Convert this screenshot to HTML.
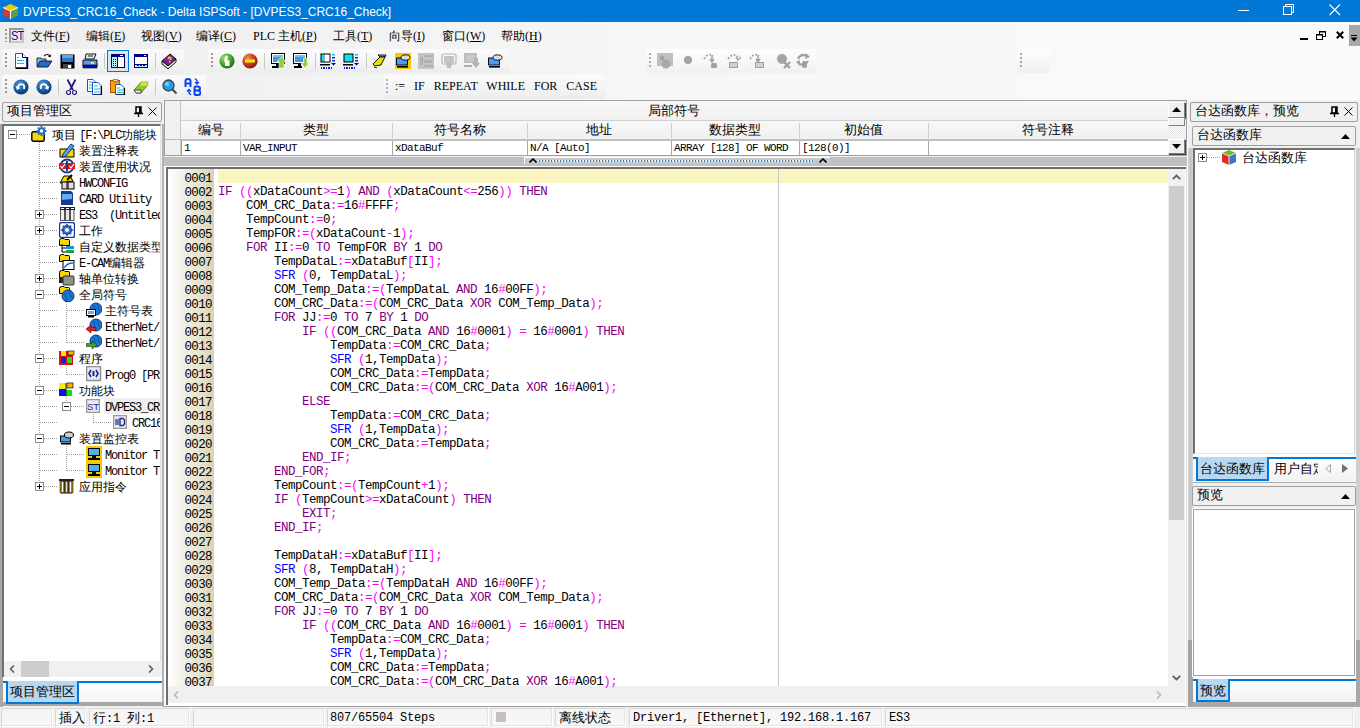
<!DOCTYPE html>
<html><head><meta charset="utf-8"><style>
*{box-sizing:border-box;margin:0;padding:0}
html,body{width:1360px;height:728px;overflow:hidden}
body{position:relative;background:#f0f0f0;font-family:"Liberation Sans",sans-serif;font-size:12px;color:#000;line-height:1}
.a{position:absolute}
.t{position:absolute;white-space:pre;line-height:14px}
.srf{font-family:"Liberation Serif",serif}
.mono{font-family:"Liberation Mono",monospace}
.band{position:absolute;height:24px;border-radius:3px;background:linear-gradient(#fbfbfb,#f3f3f3 60%,#ececec)}
.grip{position:absolute;width:2px;height:15px;top:5px;left:4px;background:repeating-linear-gradient(#9a9a9a 0 2px,transparent 2px 4px)}
.sep{position:absolute;width:1px;height:16px;top:4px;background:#c8c8c8}
.ic{position:absolute;width:16px;height:16px}
.code{position:absolute;left:218px;top:171px;font-family:"Liberation Mono",monospace;font-size:12.5px;letter-spacing:-0.5px;line-height:14px;white-space:pre;color:#000}
.code div{height:14px}
.k{color:#800080}.o{color:#ff00ff}.f{color:#0000ff}
.ln{position:absolute;left:168px;top:172px;width:46px;font-family:"Liberation Mono",monospace;font-size:12.5px;letter-spacing:-0.6px;line-height:14px;text-align:right;padding-right:2px;color:#000;white-space:pre}
</style></head><body>

<!-- title bar -->
<div class="a" style="left:0;top:0;width:1360px;height:23px;background:#0078d7"></div>
<div class="t" style="left:23px;top:5px;color:#fff;font-size:12px">DVPES3_CRC16_Check - Delta ISPSoft - [DVPES3_CRC16_Check]</div>


<svg class="a" style="left:2px;top:3px" width="17" height="17" viewBox="0 0 17 17">
<polygon points="8.5,1 16,4.5 8.5,8 1,4.5" fill="#f0c800"/>
<polygon points="1,4.5 8.5,8 8.5,16 1,12.5" fill="#d83a2a"/>
<polygon points="16,4.5 8.5,8 8.5,16 16,12.5" fill="#5aa050"/>
<polyline points="1,4.5 8.5,8 16,4.5" fill="none" stroke="#fff" stroke-width="1"/>
<line x1="8.5" y1="8" x2="8.5" y2="16" stroke="#fff" stroke-width="1"/>
</svg>
<div class="a" style="left:1238px;top:10px;width:11px;height:1px;background:#fff"></div>
<svg class="a" style="left:1283px;top:4px" width="12" height="12" viewBox="0 0 12 12"><rect x="0.5" y="2.5" width="8" height="8" fill="none" stroke="#fff"/><polyline points="2.5,2.5 2.5,0.5 10.5,0.5 10.5,8.5 8.5,8.5" fill="none" stroke="#fff"/></svg>
<svg class="a" style="left:1329px;top:4px" width="12" height="12" viewBox="0 0 12 12"><path d="M0.5 0.5L11 11M11 0.5L0.5 11" stroke="#fff" stroke-width="1.1"/></svg>

<!-- menu/toolbar area bg -->
<div class="a" style="left:0;top:22px;width:1360px;height:78px;background:linear-gradient(90deg,#eeeeee,#f6f6f6 45%,#fafafa)"></div>


<!-- menu -->
<div class="grip" style="left:5px;top:29px;height:13px"></div>
<div class="a" style="left:9px;top:28px;width:15px;height:15px;background:#ececf4;border:2px solid #9a9a9a;border-right-color:#c8c8c8;border-bottom-color:#c8c8c8"></div>
<div class="t" style="left:11px;top:28px;color:#10108a;font-size:11px;letter-spacing:-0.8px;transform:scaleY(1.2)">ST</div>
<div class="t srf" style="left:31px;top:29px">文件(<u>F</u>)</div>
<div class="t srf" style="left:86px;top:29px">编辑(<u>E</u>)</div>
<div class="t srf" style="left:141px;top:29px">视图(<u>V</u>)</div>
<div class="t srf" style="left:196px;top:29px">编译(<u>C</u>)</div>
<div class="t srf" style="left:253px;top:29px">PLC 主机(<u>P</u>)</div>
<div class="t srf" style="left:333px;top:29px">工具(<u>T</u>)</div>
<div class="t srf" style="left:389px;top:29px">向导(<u>I</u>)</div>
<div class="t srf" style="left:442px;top:29px">窗口(<u>W</u>)</div>
<div class="t srf" style="left:501px;top:29px">帮助(<u>H</u>)</div>
<div class="a" style="left:1300px;top:38px;width:8px;height:2px;background:#000"></div>
<svg class="a" style="left:1316px;top:31px" width="10" height="9" viewBox="0 0 10 9"><rect x="0.5" y="3.5" width="6" height="5" fill="none" stroke="#000"/><rect x="0.5" y="3" width="6" height="1.5" fill="#000"/><polyline points="3.5,3 3.5,0.5 9.5,0.5 9.5,5.5 7,5.5" fill="none" stroke="#000"/><rect x="3" y="0" width="7" height="1.5" fill="#000"/></svg>
<svg class="a" style="left:1336px;top:31px" width="8" height="8" viewBox="0 0 8 8"><path d="M0.8 0.8L7.2 7.2M7.2 0.8L0.8 7.2" stroke="#000" stroke-width="2"/></svg>
<div class="a" style="left:1349px;top:25px;width:11px;height:21px;background:#a8a8a8"></div>
<svg class="a" style="left:1350px;top:35px" width="9" height="8" viewBox="0 0 9 8"><rect x="1" y="0" width="6" height="1" fill="#000"/><polygon points="0.5,2.5 7.5,2.5 4,6.5" fill="#000"/></svg>


<!-- toolbar row 1 -->
<div class="band" style="left:2px;top:49px;width:182px"></div>
<div class="grip" style="left:5px;top:53px;height:14px"></div>
<svg class="a" style="left:14px;top:53px" width="16" height="16" viewBox="0 0 16 16"><path d="M1.5 0.5H8.5L12.5 4.5V14.5H1.5Z" fill="#fff" stroke="#2850d8"/><path d="M8.5 0.5V4.5H12.5" fill="#fff" stroke="#000080"/><path d="M13.5 4V15.5H1.5" fill="none" stroke="#000" stroke-width="1.4"/><path d="M3 4.5H5M3 7.5H10M3 10.5H10" stroke="#10c8d0" stroke-width="1"/></svg>
<svg class="a" style="left:36px;top:53px" width="16" height="16" viewBox="0 0 16 16"><path d="M1 5H5L6 6H10V13H1Z" fill="#80c0f0" stroke="#000" stroke-width="0.8"/><path d="M1 14L4 8H16L12 14Z" fill="#1e6ec8" stroke="#000" stroke-width="0.8"/><path d="M8 3Q11 0 14 3" fill="none" stroke="#000" stroke-width="1.1"/><path d="M12.5 3.5L14.5 3.5L14 1.5" fill="none" stroke="#000"/></svg>
<svg class="a" style="left:60px;top:54px" width="16" height="16" viewBox="0 0 16 16"><rect x="0.5" y="0.5" width="14" height="14" fill="#000"/><rect x="2" y="1" width="11" height="7" fill="#2a78c8"/><rect x="2" y="1" width="11" height="3" fill="#5aa8e8"/><rect x="3" y="10" width="9" height="4" fill="#444"/><rect x="8" y="11" width="3" height="3" fill="#fff"/></svg>
<svg class="a" style="left:82px;top:53px" width="16" height="16" viewBox="0 0 16 16"><path d="M4 1H14L12 6H3Z" fill="#e8e8e8" stroke="#000" stroke-width="0.9"/><rect x="6" y="2" width="5" height="2" fill="#888"/><path d="M1 7H15V13H1Z" fill="#5a9af0" stroke="#000" stroke-width="0.9"/><rect x="9" y="9" width="3" height="2" fill="#f0f000"/><rect x="1" y="12" width="14" height="3" fill="#0010c0" stroke="#000" stroke-width="0.6"/></svg>
<div class="sep" style="left:104px;top:53px"></div>
<div class="a" style="left:107px;top:50px;width:22px;height:22px;background:#d8e6f2;border:1px solid #0078d7"></div>
<svg class="a" style="left:111px;top:54px" width="14" height="14" viewBox="0 0 14 14" shape-rendering="crispEdges"><rect x="0" y="0" width="14" height="14" fill="#000080"/><rect x="1" y="3" width="5" height="10" fill="#b0f4ff"/><rect x="7" y="3" width="6" height="10" fill="#fff"/><rect x="9" y="1" width="3" height="1" fill="#fff"/><g fill="#000080"><rect x="2" y="5" width="1" height="1"/><rect x="4" y="5" width="1" height="1"/><rect x="2" y="7" width="1" height="1"/><rect x="4" y="7" width="1" height="1"/><rect x="2" y="9" width="1" height="1"/><rect x="4" y="9" width="1" height="1"/><rect x="2" y="11" width="1" height="1"/><rect x="4" y="11" width="1" height="1"/></g></svg>
<svg class="a" style="left:134px;top:54px" width="14" height="14" viewBox="0 0 14 14" shape-rendering="crispEdges"><rect x="0" y="0" width="14" height="14" fill="#000080"/><rect x="1" y="3" width="12" height="7" fill="#fff"/><rect x="1" y="11" width="12" height="2" fill="#b0f4ff"/><rect x="10" y="1" width="2" height="1" fill="#fff"/><g fill="#000080"><rect x="3" y="11" width="2" height="1"/><rect x="6" y="11" width="2" height="1"/><rect x="9" y="11" width="2" height="1"/></g></svg>
<div class="sep" style="left:155px;top:53px"></div>
<svg class="a" style="left:161px;top:53px" width="16" height="16" viewBox="0 0 16 16"><path d="M1 8L9 1L15 6L7 13Z" fill="#8020a0" stroke="#000" stroke-width="0.9"/><path d="M1 8L1 11L7 16L15 9L15 6L7 13Z" fill="#e0e0e0" stroke="#000" stroke-width="0.9"/><path d="M7 6Q8 3 10 5Q10 6 8.5 7" fill="none" stroke="#f0e000" stroke-width="1.4"/><rect x="8" y="8" width="1.5" height="1.5" fill="#f0e000"/></svg>

<div class="band" style="left:208px;top:49px;width:301px"></div>
<div class="grip" style="left:211px;top:53px;height:14px"></div>
<svg class="a" style="left:219px;top:53px" width="16" height="16" viewBox="0 0 16 16"><defs><radialGradient id="gg" cx="0.35" cy="0.3" r="0.8"><stop offset="0" stop-color="#a8e070"/><stop offset="0.6" stop-color="#3a9a2a"/><stop offset="1" stop-color="#1a5a1a"/></radialGradient></defs><circle cx="8" cy="8" r="7.6" fill="url(#gg)"/><path d="M6.5 3Q7.5 2 8.5 3V7L10.5 8V13H6V9L5 8Z" fill="#fff"/></svg>
<svg class="a" style="left:242px;top:53px" width="16" height="16" viewBox="0 0 16 16"><defs><radialGradient id="rg" cx="0.35" cy="0.3" r="0.8"><stop offset="0" stop-color="#f09050"/><stop offset="0.6" stop-color="#c03020"/><stop offset="1" stop-color="#701010"/></radialGradient></defs><circle cx="8" cy="8" r="7.6" fill="url(#rg)"/><rect x="3" y="6.5" width="10" height="3" fill="#f8f000"/></svg>
<div class="sep" style="left:264px;top:53px"></div>
<svg class="a" style="left:271px;top:53px" width="16" height="16" viewBox="0 0 16 16"><rect x="0.5" y="0.5" width="13" height="10" fill="#fff" stroke="#000"/><rect x="2" y="2" width="10" height="7" fill="#3a9ee0"/><rect x="2" y="2" width="10" height="2" fill="#70c0f0"/><rect x="1" y="13" width="8" height="2" fill="#000"/><rect x="5" y="11" width="3" height="2" fill="#000"/><path d="M10.5 4L15 8.5H13V15H8V8.5H6Z" fill="#90d030" stroke="#fff" stroke-width="0.6"/></svg>
<svg class="a" style="left:293px;top:53px" width="17" height="16" viewBox="0 0 17 16"><rect x="0.5" y="0.5" width="13" height="10" fill="#fff" stroke="#000"/><rect x="2" y="2" width="10" height="7" fill="#3a9ee0"/><rect x="2" y="2" width="10" height="2" fill="#70c0f0"/><rect x="1" y="13" width="8" height="2" fill="#000"/><rect x="5" y="11" width="3" height="2" fill="#000"/><path d="M10.5 5H13.5V10H16L12 15L8 10H10.5Z" fill="#90d030" stroke="#fff" stroke-width="0.6"/></svg>
<div class="sep" style="left:315px;top:53px"></div>
<svg class="a" style="left:320px;top:53px" width="17" height="16" viewBox="0 0 17 16"><rect x="0.5" y="0.5" width="10" height="9" fill="#000"/><rect x="1.5" y="1.5" width="3" height="7" fill="#10e0f0"/><rect x="4.5" y="1.5" width="5" height="7" fill="#fff"/><rect x="0" y="11" width="10" height="1.5" fill="#000"/><rect x="12" y="1" width="3" height="1.5" fill="#10c0f0"/><rect x="12" y="4" width="3" height="1.5" fill="#0030f0"/><rect x="12" y="7" width="3" height="1.5" fill="#0030f0"/><path d="M11 10H16L13.5 12.5Z" fill="#000080"/><g fill="#0020f0"><rect x="1" y="14" width="1" height="2"/><rect x="3" y="14" width="2" height="2"/><rect x="6" y="14" width="1" height="2"/><rect x="8" y="14" width="2" height="2"/><rect x="11" y="14" width="1" height="2"/></g></svg>
<svg class="a" style="left:343px;top:53px" width="17" height="16" viewBox="0 0 17 16"><rect x="0.5" y="0.5" width="10" height="9" fill="#000"/><rect x="1.5" y="1.5" width="8" height="7" fill="#10e0f0"/><rect x="0" y="11" width="10" height="1.5" fill="#000"/><rect x="12" y="1" width="3" height="1.5" fill="#10c0f0"/><rect x="12" y="4" width="3" height="1.5" fill="#0030f0"/><rect x="12" y="7" width="3" height="1.5" fill="#0030f0"/><path d="M11 10H16L13.5 12.5Z" fill="#000080"/><g fill="#0020f0"><rect x="1" y="14" width="1" height="2"/><rect x="3" y="14" width="2" height="2"/><rect x="6" y="14" width="1" height="2"/><rect x="8" y="14" width="2" height="2"/><rect x="11" y="14" width="1" height="2"/></g></svg>
<div class="sep" style="left:366px;top:53px"></div>
<svg class="a" style="left:372px;top:53px" width="16" height="16" viewBox="0 0 16 16"><path d="M6 2H14L13 4H8Z" fill="#80c0f0" stroke="#000" stroke-width="0.9"/><path d="M8 4H13L9 12L3 13L1 11Z" fill="#e8e000" stroke="#000" stroke-width="0.9"/><path d="M2 14L5 15" stroke="#444" stroke-width="1.2"/></svg>
<svg class="a" style="left:395px;top:53px" width="16" height="16" viewBox="0 0 16 16"><rect x="0" y="0" width="16" height="16" fill="#f8c800"/><rect x="1.5" y="5" width="11" height="7" fill="#4a9af0" stroke="#000" stroke-width="0.9"/><ellipse cx="10.5" cy="4.5" rx="4.5" ry="2.6" fill="#ddd" stroke="#000" stroke-width="0.9"/><rect x="2" y="13" width="11" height="1.6" fill="#000"/></svg>
<svg class="a" style="left:418px;top:53px" width="16" height="16" viewBox="0 0 16 16"><rect x="0" y="0" width="16" height="16" fill="#c4c4c4"/><g fill="#b0b0b0"><rect x="6" y="2" width="9" height="2"/><rect x="2" y="4" width="3" height="8"/><rect x="6" y="7" width="8" height="3"/><rect x="6" y="12" width="9" height="2"/></g></svg>
<svg class="a" style="left:441px;top:53px" width="16" height="16" viewBox="0 0 16 16"><rect x="1" y="1" width="14" height="10" rx="1.5" fill="none" stroke="#b4b4b4" stroke-width="1.2"/><rect x="3" y="3" width="10" height="7" fill="#c4c4c4"/><path d="M5 10H11L10 15H6Z" fill="#bdbdbd"/></svg>
<svg class="a" style="left:464px;top:53px" width="16" height="16" viewBox="0 0 16 16"><rect x="0" y="0" width="13" height="10" fill="#bcbcbc"/><rect x="2" y="1.5" width="9" height="7" fill="#c8c8c8"/><rect x="0" y="12" width="8" height="2" fill="#b0b0b0"/><path d="M10 5H14V10H16L12 15L8 10H10Z" fill="#b4b4b4"/></svg>
<svg class="a" style="left:487px;top:53px" width="16" height="16" viewBox="0 0 16 16"><rect x="1.5" y="5" width="11" height="7" fill="#4a9af0" stroke="#000" stroke-width="0.9"/><ellipse cx="10.5" cy="4.5" rx="4.5" ry="2.6" fill="#ddd" stroke="#000" stroke-width="0.9"/><rect x="2" y="13" width="11" height="1.6" fill="#000"/></svg>

<div class="band" style="left:646px;top:49px;width:171px;background:linear-gradient(#fdfdfd,#f6f6f6 60%,#f0f0f0)"></div>
<div class="grip" style="left:649px;top:53px;height:14px;background:repeating-linear-gradient(#b0b0b0 0 2px,transparent 2px 4px)"></div>
<svg class="a" style="left:657px;top:53px" width="16" height="16" viewBox="0 0 16 16"><rect x="0" y="0" width="16" height="13" fill="#c0c0c0"/><circle cx="9" cy="11" r="4.5" fill="#a8a8a8"/><path d="M3 3L7 7M7 3L3 7" stroke="#9a9a9a" stroke-width="1.5"/></svg>
<svg class="a" style="left:684px;top:56px" width="8" height="8" viewBox="0 0 8 8"><circle cx="4" cy="4" r="4" fill="#a4a4a4"/></svg>
<svg class="a" style="left:703px;top:52px" width="16" height="16" viewBox="0 0 16 16"><path d="M1 7Q5 0 10 4" fill="none" stroke="#a8a8a8" stroke-width="1.8" stroke-dasharray="2 1.5"/><path d="M9 3V9M7 7L9 10L11 7" fill="none" stroke="#a0a0a0" stroke-width="1.4"/><rect x="8" y="11" width="6" height="5" rx="1.5" fill="#a0a0a0"/></svg>
<svg class="a" style="left:727px;top:52px" width="16" height="16" viewBox="0 0 16 16"><path d="M1 7Q6 0 11 5" fill="none" stroke="#a8a8a8" stroke-width="1.8" stroke-dasharray="2 1.5"/><path d="M9 5L11 8L14 5" fill="none" stroke="#a0a0a0" stroke-width="1.4"/><rect x="2.5" y="10.5" width="8" height="5" fill="#d0d0d0" stroke="#a0a0a0"/></svg>
<svg class="a" style="left:749px;top:52px" width="16" height="16" viewBox="0 0 16 16"><path d="M1 7Q5 0 10 4" fill="none" stroke="#a8a8a8" stroke-width="1.8" stroke-dasharray="2 1.5"/><path d="M9 3V9M7 7L9 10L11 7" fill="none" stroke="#a0a0a0" stroke-width="1.4"/><rect x="6.5" y="10.5" width="8" height="5" fill="#d0d0d0" stroke="#a0a0a0"/></svg>
<svg class="a" style="left:776px;top:53px" width="16" height="16" viewBox="0 0 16 16"><circle cx="6" cy="6" r="5" fill="#a4a4a4"/><path d="M8 9L14 15M14 9L8 15" stroke="#a0a0a0" stroke-width="2.4"/></svg>
<svg class="a" style="left:795px;top:52px" width="16" height="16" viewBox="0 0 16 16"><path d="M3 7Q6 1 12 4" fill="none" stroke="#a4a4a4" stroke-width="2.2"/><path d="M11 1L15 5L10 7Z" fill="#a4a4a4"/><path d="M13 9Q10 14 4 12" fill="none" stroke="#a4a4a4" stroke-width="2.2"/><path d="M1 10L5 8L5 14Z" fill="#a4a4a4"/><rect x="7" y="9" width="5" height="7" rx="2" fill="#a0a0a0"/></svg>

<div class="band" style="left:1017px;top:49px;width:34px;background:linear-gradient(#fdfdfd,#f6f6f6 60%,#f0f0f0)"></div>
<div class="grip" style="left:1020px;top:53px;height:14px;background:repeating-linear-gradient(#a8a8a8 0 2px,transparent 2px 4px)"></div>

<!-- toolbar row 2 -->
<div class="band" style="left:2px;top:75px;width:204px"></div>
<div class="grip" style="left:5px;top:79px;height:14px"></div>
<svg class="a" style="left:13px;top:79px" width="16" height="16" viewBox="0 0 16 16"><defs><radialGradient id="bg1" cx="0.4" cy="0.3" r="0.8"><stop offset="0" stop-color="#4a9ae0"/><stop offset="0.65" stop-color="#14508c"/><stop offset="1" stop-color="#082040"/></radialGradient></defs><circle cx="8" cy="8" r="7.6" fill="url(#bg1)"/><path d="M4.5 9Q6 4 10 5.5Q12 7 11 10" fill="none" stroke="#fff" stroke-width="1.8"/><path d="M2.5 7L4 11L7.5 9Z" fill="#fff"/></svg>
<svg class="a" style="left:36px;top:79px" width="16" height="16" viewBox="0 0 16 16"><circle cx="8" cy="8" r="7.6" fill="url(#bg1)"/><path d="M11.5 9Q10 4 6 5.5Q4 7 5 10" fill="none" stroke="#fff" stroke-width="1.8"/><path d="M13.5 7L12 11L8.5 9Z" fill="#fff"/></svg>
<div class="sep" style="left:58px;top:79px"></div>
<svg class="a" style="left:65px;top:79px" width="13" height="16" viewBox="0 0 13 16"><path d="M2.5 0.5L8 11M10.5 0.5L5 11" stroke="#2a1a80" stroke-width="1.8"/><circle cx="3.5" cy="13.5" r="2" fill="none" stroke="#2a1a80" stroke-width="1.2"/><circle cx="9.5" cy="13.5" r="2" fill="none" stroke="#2a1a80" stroke-width="1.2"/></svg>
<svg class="a" style="left:87px;top:79px" width="16" height="16" viewBox="0 0 16 16"><path d="M0.5 0.5H6L8 2.5V12.5H0.5Z" fill="#fff" stroke="#2050d0"/><path d="M2 3H6M2 6H7M2 9H7" stroke="#20c0c0"/><path d="M5.5 3.5H11L14 6.5V15.5H5.5Z" fill="#fff" stroke="#2050d0"/><path d="M14.5 7V16H6" fill="none" stroke="#000" stroke-width="1.1"/><path d="M7 7H11M7 10H13M7 13H13" stroke="#20c0c0"/></svg>
<svg class="a" style="left:110px;top:79px" width="16" height="16" viewBox="0 0 16 16"><rect x="0.5" y="1.5" width="9" height="12" fill="#f8a800" stroke="#a04000" stroke-width="0.9"/><rect x="3" y="0.3" width="5" height="2.5" rx="1" fill="#e8d0a0" stroke="#804000" stroke-width="0.7"/><path d="M5.5 5.5H11L14 8.5V15.5H5.5Z" fill="#fff" stroke="#2050d0"/><path d="M14.5 9V16H6" fill="none" stroke="#000" stroke-width="1.1"/><path d="M7 9H10M7 11H13M7 13.5H13" stroke="#20c0c0"/></svg>
<svg class="a" style="left:133px;top:79px" width="16" height="16" viewBox="0 0 16 16"><path d="M1 11L8 3H15L14 7L8 14H3Z" fill="#90c820" stroke="#405010" stroke-width="0.6"/><path d="M8 3H15L14 7H7Z" fill="#c0e830"/><path d="M1 11H8V14H3Z" fill="#f0f0f0" stroke="#404040" stroke-width="0.9"/></svg>
<div class="sep" style="left:155px;top:79px"></div>
<svg class="a" style="left:162px;top:79px" width="16" height="16" viewBox="0 0 16 16"><circle cx="6.5" cy="6.5" r="5.5" fill="#1aa0f0" stroke="#404040" stroke-width="1.3"/><circle cx="5" cy="5" r="2" fill="#80d0ff"/><path d="M10.5 10.5L14.5 14.5" stroke="#404040" stroke-width="1.8"/></svg>
<svg class="a" style="left:184px;top:78px" width="17" height="18" viewBox="0 0 17 18"><path d="M1.5 9V3Q1.5 1 4 1Q6.5 1 6.5 3V9M1.5 5.5H6.5" fill="none" stroke="#0a40f0" stroke-width="2"/><path d="M10.5 8.5V17M10.5 8.5H13.5Q16 8.5 16 10.8Q16 12.5 13.5 12.5H10.5M13.5 12.5Q16.5 12.5 16.5 14.8Q16.5 17 13.5 17H10.5" fill="none" stroke="#0a40f0" stroke-width="2"/><path d="M11 0.5L13 2.5V5.5M11 4L13 6L15 4" fill="none" stroke="#0a40f0" stroke-width="1.3"/><path d="M7 17L5 15V12M7 13.5L5 11.5L3 13.5" fill="none" stroke="#0a40f0" stroke-width="1.3"/></svg>

<div class="band" style="left:383px;top:75px;width:222px"></div>
<div class="grip" style="left:386px;top:79px;height:14px;background:repeating-linear-gradient(#b0b0b0 0 2px,transparent 2px 4px)"></div>
<div class="t srf" style="left:395px;top:79px;font-size:12px;word-spacing:0">:=   IF   REPEAT   WHILE   FOR   CASE</div>


<!-- left panel -->
<div class="a" style="left:0;top:100px;width:165px;height:607px;background:#f0f0f0"></div>
<div class="a" style="left:2px;top:102px;width:160px;height:20px;background:#f0f0f0;border:1px solid #a0a0a0;border-radius:2px"></div>
<div class="t" style="left:7px;top:104px;font-size:13px">项目管理区</div>
<svg class="a" style="left:134px;top:106px" width="9" height="11" viewBox="0 0 9 11"><path d="M2 1H7V7H2Z" fill="none" stroke="#000" stroke-width="1.5"/><rect x="5" y="1" width="2" height="6" fill="#000"/><path d="M0 7.5H9M4.5 7.5V11" stroke="#000" stroke-width="1.3"/></svg>
<svg class="a" style="left:148px;top:107px" width="9" height="9" viewBox="0 0 9 9"><path d="M0.5 0.5L8.5 8.5M8.5 0.5L0.5 8.5" stroke="#000" stroke-width="1"/></svg>
<div class="a" style="left:0;top:124px;width:3px;height:583px;background:#a8a8a8"></div>
<div class="a" style="left:162px;top:124px;width:3px;height:583px;background:#b4b4b4"></div>
<div class="a" style="left:2px;top:124px;width:159px;height:553px;background:#fff;border-top:2px solid #707070;border-left:2px solid #707070;border-right:1px solid #e0e0e0"></div>
<div class="a" style="left:3px;top:702px;width:162px;height:4px;background:#a8a8a8"></div>
<div class="a" style="left:39px;top:140px;width:1px;height:347px;background:repeating-linear-gradient(#a0a0a0 0 1px,transparent 1px 2px)"></div>
<div class="a" style="left:66px;top:300px;width:1px;height:43px;background:repeating-linear-gradient(#a0a0a0 0 1px,transparent 1px 2px)"></div>
<div class="a" style="left:66px;top:364px;width:1px;height:11px;background:repeating-linear-gradient(#a0a0a0 0 1px,transparent 1px 2px)"></div>
<div class="a" style="left:66px;top:396px;width:1px;height:6px;background:repeating-linear-gradient(#a0a0a0 0 1px,transparent 1px 2px)"></div>
<div class="a" style="left:93px;top:412px;width:1px;height:11px;background:repeating-linear-gradient(#a0a0a0 0 1px,transparent 1px 2px)"></div>
<div class="a" style="left:66px;top:444px;width:1px;height:27px;background:repeating-linear-gradient(#a0a0a0 0 1px,transparent 1px 2px)"></div>
<div class="a" style="left:17px;top:134px;width:14px;height:1px;background:repeating-linear-gradient(90deg,#a0a0a0 0 1px,transparent 1px 2px)"></div>
<div class="a" style="left:40px;top:150px;width:18px;height:1px;background:repeating-linear-gradient(90deg,#a0a0a0 0 1px,transparent 1px 2px)"></div>
<div class="a" style="left:40px;top:166px;width:18px;height:1px;background:repeating-linear-gradient(90deg,#a0a0a0 0 1px,transparent 1px 2px)"></div>
<div class="a" style="left:40px;top:182px;width:18px;height:1px;background:repeating-linear-gradient(90deg,#a0a0a0 0 1px,transparent 1px 2px)"></div>
<div class="a" style="left:40px;top:198px;width:18px;height:1px;background:repeating-linear-gradient(90deg,#a0a0a0 0 1px,transparent 1px 2px)"></div>
<div class="a" style="left:40px;top:214px;width:18px;height:1px;background:repeating-linear-gradient(90deg,#a0a0a0 0 1px,transparent 1px 2px)"></div>
<div class="a" style="left:40px;top:230px;width:18px;height:1px;background:repeating-linear-gradient(90deg,#a0a0a0 0 1px,transparent 1px 2px)"></div>
<div class="a" style="left:40px;top:246px;width:18px;height:1px;background:repeating-linear-gradient(90deg,#a0a0a0 0 1px,transparent 1px 2px)"></div>
<div class="a" style="left:40px;top:262px;width:18px;height:1px;background:repeating-linear-gradient(90deg,#a0a0a0 0 1px,transparent 1px 2px)"></div>
<div class="a" style="left:40px;top:278px;width:18px;height:1px;background:repeating-linear-gradient(90deg,#a0a0a0 0 1px,transparent 1px 2px)"></div>
<div class="a" style="left:40px;top:294px;width:18px;height:1px;background:repeating-linear-gradient(90deg,#a0a0a0 0 1px,transparent 1px 2px)"></div>
<div class="a" style="left:40px;top:310px;width:18px;height:1px;background:repeating-linear-gradient(90deg,#a0a0a0 0 1px,transparent 1px 2px)"></div>
<div class="a" style="left:40px;top:326px;width:18px;height:1px;background:repeating-linear-gradient(90deg,#a0a0a0 0 1px,transparent 1px 2px)"></div>
<div class="a" style="left:40px;top:342px;width:18px;height:1px;background:repeating-linear-gradient(90deg,#a0a0a0 0 1px,transparent 1px 2px)"></div>
<div class="a" style="left:40px;top:358px;width:18px;height:1px;background:repeating-linear-gradient(90deg,#a0a0a0 0 1px,transparent 1px 2px)"></div>
<div class="a" style="left:40px;top:374px;width:18px;height:1px;background:repeating-linear-gradient(90deg,#a0a0a0 0 1px,transparent 1px 2px)"></div>
<div class="a" style="left:40px;top:390px;width:18px;height:1px;background:repeating-linear-gradient(90deg,#a0a0a0 0 1px,transparent 1px 2px)"></div>
<div class="a" style="left:40px;top:406px;width:18px;height:1px;background:repeating-linear-gradient(90deg,#a0a0a0 0 1px,transparent 1px 2px)"></div>
<div class="a" style="left:40px;top:422px;width:18px;height:1px;background:repeating-linear-gradient(90deg,#a0a0a0 0 1px,transparent 1px 2px)"></div>
<div class="a" style="left:40px;top:438px;width:18px;height:1px;background:repeating-linear-gradient(90deg,#a0a0a0 0 1px,transparent 1px 2px)"></div>
<div class="a" style="left:40px;top:454px;width:18px;height:1px;background:repeating-linear-gradient(90deg,#a0a0a0 0 1px,transparent 1px 2px)"></div>
<div class="a" style="left:40px;top:470px;width:18px;height:1px;background:repeating-linear-gradient(90deg,#a0a0a0 0 1px,transparent 1px 2px)"></div>
<div class="a" style="left:40px;top:486px;width:18px;height:1px;background:repeating-linear-gradient(90deg,#a0a0a0 0 1px,transparent 1px 2px)"></div>
<div class="a" style="left:67px;top:310px;width:18px;height:1px;background:repeating-linear-gradient(90deg,#a0a0a0 0 1px,transparent 1px 2px)"></div>
<div class="a" style="left:67px;top:326px;width:18px;height:1px;background:repeating-linear-gradient(90deg,#a0a0a0 0 1px,transparent 1px 2px)"></div>
<div class="a" style="left:67px;top:342px;width:18px;height:1px;background:repeating-linear-gradient(90deg,#a0a0a0 0 1px,transparent 1px 2px)"></div>
<div class="a" style="left:67px;top:374px;width:18px;height:1px;background:repeating-linear-gradient(90deg,#a0a0a0 0 1px,transparent 1px 2px)"></div>
<div class="a" style="left:67px;top:454px;width:18px;height:1px;background:repeating-linear-gradient(90deg,#a0a0a0 0 1px,transparent 1px 2px)"></div>
<div class="a" style="left:67px;top:470px;width:18px;height:1px;background:repeating-linear-gradient(90deg,#a0a0a0 0 1px,transparent 1px 2px)"></div>
<div class="a" style="left:71px;top:406px;width:14px;height:1px;background:repeating-linear-gradient(90deg,#a0a0a0 0 1px,transparent 1px 2px)"></div>
<div class="a" style="left:94px;top:422px;width:18px;height:1px;background:repeating-linear-gradient(90deg,#a0a0a0 0 1px,transparent 1px 2px)"></div>
<div class="a" style="left:8px;top:130px;width:9px;height:9px;background:#fff;border:1px solid #8c8c8c"></div>
<div class="a" style="left:10px;top:134px;width:5px;height:1px;background:#000"></div>
<div class="a" style="left:35px;top:210px;width:9px;height:9px;background:#fff;border:1px solid #8c8c8c"></div>
<div class="a" style="left:37px;top:214px;width:5px;height:1px;background:#000"></div>
<div class="a" style="left:39px;top:212px;width:1px;height:5px;background:#000"></div>
<div class="a" style="left:35px;top:226px;width:9px;height:9px;background:#fff;border:1px solid #8c8c8c"></div>
<div class="a" style="left:37px;top:230px;width:5px;height:1px;background:#000"></div>
<div class="a" style="left:39px;top:228px;width:1px;height:5px;background:#000"></div>
<div class="a" style="left:35px;top:274px;width:9px;height:9px;background:#fff;border:1px solid #8c8c8c"></div>
<div class="a" style="left:37px;top:278px;width:5px;height:1px;background:#000"></div>
<div class="a" style="left:39px;top:276px;width:1px;height:5px;background:#000"></div>
<div class="a" style="left:35px;top:290px;width:9px;height:9px;background:#fff;border:1px solid #8c8c8c"></div>
<div class="a" style="left:37px;top:294px;width:5px;height:1px;background:#000"></div>
<div class="a" style="left:35px;top:354px;width:9px;height:9px;background:#fff;border:1px solid #8c8c8c"></div>
<div class="a" style="left:37px;top:358px;width:5px;height:1px;background:#000"></div>
<div class="a" style="left:35px;top:386px;width:9px;height:9px;background:#fff;border:1px solid #8c8c8c"></div>
<div class="a" style="left:37px;top:390px;width:5px;height:1px;background:#000"></div>
<div class="a" style="left:35px;top:434px;width:9px;height:9px;background:#fff;border:1px solid #8c8c8c"></div>
<div class="a" style="left:37px;top:438px;width:5px;height:1px;background:#000"></div>
<div class="a" style="left:35px;top:482px;width:9px;height:9px;background:#fff;border:1px solid #8c8c8c"></div>
<div class="a" style="left:37px;top:486px;width:5px;height:1px;background:#000"></div>
<div class="a" style="left:39px;top:484px;width:1px;height:5px;background:#000"></div>
<div class="a" style="left:62px;top:402px;width:9px;height:9px;background:#fff;border:1px solid #8c8c8c"></div>
<div class="a" style="left:64px;top:406px;width:5px;height:1px;background:#000"></div>
<div class="a" style="left:104px;top:398px;width:56px;height:16px;background:#efefef"></div>
<div class="a" style="left:4px;top:126px;width:156px;height:551px;overflow:hidden">
<div class="t" style="left:48px;top:2px;font-size:12px">项目 <span style="font-family:'Liberation Mono',monospace;font-size:12px;letter-spacing:-1.2px">[F:\PLC</span>功能块</div>
<div class="t" style="left:75px;top:18px;font-size:12px">装置注释表</div>
<div class="t" style="left:75px;top:34px;font-size:12px">装置使用状况</div>
<div class="t" style="left:75px;top:50px;font-size:12px"><span style="font-family:'Liberation Mono',monospace;font-size:12px;letter-spacing:-1.2px">HWCONFIG</span></div>
<div class="t" style="left:75px;top:66px;font-size:12px"><span style="font-family:'Liberation Mono',monospace;font-size:12px;letter-spacing:-1.2px">CARD Utility</span></div>
<div class="t" style="left:75px;top:82px;font-size:12px"><span style="font-family:'Liberation Mono',monospace;font-size:12px;letter-spacing:-1.2px">ES3  (Untitled</span></div>
<div class="t" style="left:75px;top:98px;font-size:12px">工作</div>
<div class="t" style="left:75px;top:114px;font-size:12px">自定义数据类型</div>
<div class="t" style="left:75px;top:130px;font-size:12px"><span style="font-family:'Liberation Mono',monospace;font-size:12px;letter-spacing:-1.2px">E-CAM</span>编辑器</div>
<div class="t" style="left:75px;top:146px;font-size:12px">轴单位转换</div>
<div class="t" style="left:75px;top:162px;font-size:12px">全局符号</div>
<div class="t" style="left:101px;top:178px;font-size:12px">主符号表</div>
<div class="t" style="left:101px;top:194px;font-size:12px"><span style="font-family:'Liberation Mono',monospace;font-size:12px;letter-spacing:-1.2px">EtherNet/</span></div>
<div class="t" style="left:101px;top:210px;font-size:12px"><span style="font-family:'Liberation Mono',monospace;font-size:12px;letter-spacing:-1.2px">EtherNet/</span></div>
<div class="t" style="left:75px;top:226px;font-size:12px">程序</div>
<div class="t" style="left:101px;top:242px;font-size:12px"><span style="font-family:'Liberation Mono',monospace;font-size:12px;letter-spacing:-1.2px">Prog0 [PR</span></div>
<div class="t" style="left:75px;top:258px;font-size:12px">功能块</div>
<div class="t" style="left:101px;top:274px;font-size:12px"><span style="font-family:'Liberation Mono',monospace;font-size:12px;letter-spacing:-1.2px">DVPES3_CR</span></div>
<div class="t" style="left:128px;top:290px;font-size:12px"><span style="font-family:'Liberation Mono',monospace;font-size:12px;letter-spacing:-1.2px">CRC16</span></div>
<div class="t" style="left:75px;top:306px;font-size:12px">装置监控表</div>
<div class="t" style="left:101px;top:322px;font-size:12px"><span style="font-family:'Liberation Mono',monospace;font-size:12px;letter-spacing:-1.2px">Monitor T</span></div>
<div class="t" style="left:101px;top:338px;font-size:12px"><span style="font-family:'Liberation Mono',monospace;font-size:12px;letter-spacing:-1.2px">Monitor T</span></div>
<div class="t" style="left:75px;top:354px;font-size:12px">应用指令</div>
</div>
<svg class="a" style="left:31px;top:126px" width="16" height="16" viewBox="0 0 16 16"><rect x="0.8" y="5.8" width="12.4" height="9.4" rx="1.8" fill="#f8d800" stroke="#000" stroke-width="1.4"/><g transform="translate(10.5 5)"><circle r="3.6" fill="#2a70c8"/><path d="M0 -5V5M-5 0H5M-3.5 -3.5L3.5 3.5M3.5 -3.5L-3.5 3.5" stroke="#2a70c8" stroke-width="2"/><circle r="1.7" fill="#fff"/></g></svg>
<svg class="a" style="left:59px;top:142px" width="16" height="16" viewBox="0 0 16 16"><path d="M1 7H15V15H1Z" fill="#f8d800" stroke="#000"/><path d="M4 12L12 2L15 4L7 14L3 15Z" fill="#5a9ae8" stroke="#0a3a90"/></svg>
<svg class="a" style="left:59px;top:158px" width="16" height="16" viewBox="0 0 16 16"><circle cx="8" cy="8" r="6.5" fill="none" stroke="#1a3a90" stroke-width="2"/><rect x="0" y="5" width="7" height="6" fill="#e01818"/><rect x="9" y="5" width="7" height="6" fill="#e01818"/><path d="M1.5 8L3 10L6 6M10.5 8L12 10L15 6" fill="none" stroke="#fff" stroke-width="1.2"/><rect x="7" y="3" width="2" height="10" fill="#1a3a90"/></svg>
<svg class="a" style="left:59px;top:174px" width="16" height="16" viewBox="0 0 16 16"><path d="M1 9L5 2H11L14 7Z" fill="#f8d800" stroke="#000"/><rect x="3" y="8" width="5" height="7" fill="#ddd" stroke="#000"/><rect x="9" y="8" width="6" height="7" fill="#ddd" stroke="#000"/><path d="M8 6L13 1" stroke="#000" stroke-width="2"/></svg>
<svg class="a" style="left:59px;top:190px" width="16" height="16" viewBox="0 0 16 16"><path d="M2 1H12L14 3V15H2Z" fill="#1a3a90"/><path d="M3 4H13V9L3 10Z" fill="#60b0f0"/></svg>
<svg class="a" style="left:59px;top:206px" width="16" height="16" viewBox="0 0 16 16"><rect x="1.5" y="1.5" width="4" height="13" fill="#f0f0f0" stroke="#555"/><rect x="6.5" y="1.5" width="4" height="13" fill="#e8e8e8" stroke="#555"/><rect x="11.5" y="1.5" width="3.5" height="13" fill="#f0f0f0" stroke="#555"/><rect x="1" y="1" width="15" height="3" fill="#222"/><g fill="#fff"><rect x="2" y="2" width="3" height="1"/><rect x="7" y="2" width="3" height="1"/><rect x="12" y="2" width="3" height="1"/></g></svg>
<svg class="a" style="left:59px;top:222px" width="16" height="16" viewBox="0 0 16 16"><rect x="0.5" y="0.5" width="15" height="15" rx="2" fill="#fff" stroke="#1a3a90" stroke-width="1.4"/><circle cx="8" cy="8" r="4" fill="none" stroke="#2050c0" stroke-width="2.2"/><path d="M8 2V14M2 8H14M3.8 3.8L12.2 12.2M12.2 3.8L3.8 12.2" stroke="#2050c0" stroke-width="1.6"/><circle cx="8" cy="8" r="2" fill="#fff"/></svg>
<svg class="a" style="left:59px;top:238px" width="16" height="16" viewBox="0 0 16 16"><path d="M0.5 2.5Q0.5 0.5 2.5 0.5H5L6 1.5H9.5Q10.5 1.5 10.5 2.5V7.5H0.5Z" fill="#f8d800" stroke="#000"/><path d="M3 6V14H7M3 10H7" fill="none" stroke="#000"/><rect x="7" y="8" width="8" height="3" fill="#1a90e0"/><rect x="7" y="12" width="8" height="3" fill="#20a040"/></svg>
<svg class="a" style="left:59px;top:254px" width="16" height="16" viewBox="0 0 16 16"><path d="M0.5 2.5Q0.5 0.5 2.5 0.5H5L6 1.5H9.5Q10.5 1.5 10.5 2.5V7.5H0.5Z" fill="#f8d800" stroke="#000"/><rect x="4" y="6.5" width="11" height="9" fill="#fff" stroke="#000"/><path d="M5 14Q8 9 14 9" fill="none" stroke="#2060d0" stroke-width="1.3"/></svg>
<svg class="a" style="left:59px;top:270px" width="16" height="16" viewBox="0 0 16 16"><path d="M0.5 2.5Q0.5 0.5 2.5 0.5H5L6 1.5H9.5Q10.5 1.5 10.5 2.5V7.5H0.5Z" fill="#f8d800" stroke="#000"/><rect x="0" y="7" width="5" height="6" fill="#222"/><rect x="4" y="6" width="11" height="9" rx="1" fill="#909090" stroke="#333"/></svg>
<svg class="a" style="left:59px;top:286px" width="16" height="16" viewBox="0 0 16 16"><path d="M0.5 2.5Q0.5 0.5 2.5 0.5H5L6 1.5H9.5Q10.5 1.5 10.5 2.5V7.5H0.5Z" fill="#f8d800" stroke="#000"/><circle cx="9" cy="10" r="6" fill="#1a78d0" stroke="#0a3a80"/><path d="M5 7Q9 10 7 15M11 5Q10 10 14 12" fill="none" stroke="#0a50a0"/></svg>
<svg class="a" style="left:86px;top:302px" width="16" height="16" viewBox="0 0 16 16"><circle cx="10" cy="7" r="6" fill="#1a78d0" stroke="#0a3a80"/><path d="M7 3Q10 6 8 12M12 2Q11 7 15 9" fill="none" stroke="#0a50a0"/><rect x="0.5" y="7.5" width="9" height="6" fill="#fff" stroke="#000"/><rect x="2" y="9" width="6" height="3" fill="#5ab0f0"/><rect x="2" y="14" width="6" height="1.5" fill="#000"/></svg>
<svg class="a" style="left:86px;top:318px" width="16" height="16" viewBox="0 0 16 16"><circle cx="10" cy="7" r="6" fill="#1a78d0" stroke="#0a3a80"/><path d="M7 3Q10 6 8 12M12 2Q11 7 15 9" fill="none" stroke="#0a50a0"/><path d="M0 11L5 7V9.5H10V12.5H5V15Z" fill="#e02020" stroke="#600" stroke-width="0.6"/></svg>
<svg class="a" style="left:86px;top:334px" width="16" height="16" viewBox="0 0 16 16"><circle cx="10" cy="7" r="6" fill="#1a78d0" stroke="#0a3a80"/><path d="M7 3Q10 6 8 12M12 2Q11 7 15 9" fill="none" stroke="#0a50a0"/><path d="M11 11L6 7V9.5H0V12.5H6V15Z" fill="#40a030" stroke="#204010" stroke-width="0.6"/></svg>
<svg class="a" style="left:59px;top:350px" width="16" height="16" viewBox="0 0 16 16"><rect x="0" y="1" width="14" height="14" fill="#e01010"/><rect x="2" y="1" width="5" height="5" fill="#f8e000"/><rect x="2" y="7" width="5" height="6" fill="#1020e0"/><rect x="8" y="7" width="5" height="6" fill="#20e020"/><rect x="9" y="1" width="6" height="4" fill="#f8b000" stroke="#000" stroke-width="0.6"/></svg>
<svg class="a" style="left:86px;top:366px" width="16" height="16" viewBox="0 0 16 16"><rect x="0.5" y="0.5" width="14" height="14" fill="#e8e8f0" stroke="#909090" stroke-width="1.5"/><path d="M5 4L3 7.5L5 11M10 4L12 7.5L10 11" fill="none" stroke="#1a2a90" stroke-width="1.6"/><rect x="6.5" y="5" width="2" height="5" fill="#1a2a90"/></svg>
<svg class="a" style="left:59px;top:382px" width="16" height="16" viewBox="0 0 16 16"><rect x="0" y="1" width="7" height="6" fill="#f8f000"/><rect x="0" y="7" width="7" height="7" fill="#0a10f0"/><rect x="7" y="8" width="6" height="6" fill="#10e010"/><rect x="8" y="1" width="6" height="5" fill="#f8b000" stroke="#402000" stroke-width="0.8"/><rect x="6.5" y="1" width="1" height="13" fill="#222"/></svg>
<svg class="a" style="left:86px;top:399px" width="14" height="14" viewBox="0 0 14 14"><rect x="0.5" y="0.5" width="13" height="13" fill="#eaeaf0" stroke="#9a9a9a" stroke-width="1.5"/><text x="7" y="11" font-family="Liberation Sans" font-size="9.5" fill="#1a1aa0" text-anchor="middle">ST</text></svg>
<svg class="a" style="left:113px;top:415px" width="14" height="14" viewBox="0 0 14 14"><rect x="0.5" y="0.5" width="13" height="13" fill="#eaeaf0" stroke="#9a9a9a" stroke-width="1.5"/><path d="M3 4V10M5 4V10" stroke="#1a2a90" stroke-width="1.2"/><path d="M7 3.5H10L11.5 5V9L10 10.5H7Z" fill="none" stroke="#1a2a90" stroke-width="1.4"/></svg>
<svg class="a" style="left:59px;top:430px" width="16" height="16" viewBox="0 0 16 16"><rect x="1.5" y="6" width="10" height="6" fill="#4a9af0" stroke="#000"/><ellipse cx="10" cy="5" rx="4.5" ry="3" fill="#ccc" stroke="#000"/><rect x="2" y="13" width="10" height="1.5" fill="#000"/></svg>
<svg class="a" style="left:86px;top:446px" width="16" height="16" viewBox="0 0 16 16"><rect x="0" y="0" width="16" height="16" fill="#f8c800"/><rect x="2" y="2" width="12" height="8" fill="#000"/><rect x="3" y="3" width="10" height="6" fill="#4ab0f0"/><rect x="2" y="12" width="12" height="2" fill="#000"/><rect x="6" y="10" width="4" height="2" fill="#000"/></svg>
<svg class="a" style="left:86px;top:462px" width="16" height="16" viewBox="0 0 16 16"><rect x="0" y="0" width="16" height="16" fill="#f8c800"/><rect x="2" y="2" width="12" height="8" fill="#000"/><rect x="3" y="3" width="10" height="6" fill="#4ab0f0"/><rect x="2" y="12" width="12" height="2" fill="#000"/><rect x="6" y="10" width="4" height="2" fill="#000"/></svg>
<svg class="a" style="left:59px;top:478px" width="16" height="16" viewBox="0 0 16 16"><rect x="0" y="1" width="15" height="14" fill="#f8c800"/><rect x="2" y="3" width="3" height="12" fill="#fff" stroke="#000"/><rect x="6" y="3" width="3" height="12" fill="#ddd" stroke="#000"/><rect x="10" y="3" width="3" height="12" fill="#fff" stroke="#000"/><rect x="0" y="1" width="15" height="2" fill="#222"/></svg>

<!-- left h-scroll -->
<div class="a" style="left:4px;top:661px;width:157px;height:16px;background:#f0f0f0"></div>
<div class="a" style="left:21px;top:661px;width:28px;height:16px;background:#cdcdcd"></div>
<svg class="a" style="left:9px;top:665px" width="6" height="8" viewBox="0 0 6 8"><path d="M5 0.5L1.5 4L5 7.5" fill="none" stroke="#606060" stroke-width="1.6"/></svg>
<svg class="a" style="left:148px;top:665px" width="6" height="8" viewBox="0 0 6 8"><path d="M1 0.5L4.5 4L1 7.5" fill="none" stroke="#606060" stroke-width="1.6"/></svg>
<!-- left tab strip -->
<div class="a" style="left:3px;top:677px;width:159px;height:25px;background:linear-gradient(#fff,#f4f4f4)"></div>
<div class="a" style="left:3px;top:681px;width:159px;height:2px;background:#0078d7"></div>
<div class="a" style="left:6px;top:681px;width:73px;height:23px;background:#b8d8f2;border:2px solid #0078d7;border-top:0"></div>
<div class="t" style="left:10px;top:685px;font-size:13px">项目管理区</div>



<!-- local symbol table -->
<div class="a" style="left:164px;top:100px;width:1023px;height:56px;background:#fff;border:1px solid #a0a0a0"></div>
<div class="a" style="left:165px;top:101px;width:16px;height:54px;background:#f0f0f0;border-right:1px solid #c8c8c8"></div>
<div class="a" style="left:181px;top:101px;width:987px;height:19px;background:linear-gradient(#f8f8f8,#f0f0f0)"></div>
<div class="a" style="left:181px;top:120px;width:987px;height:20px;background:linear-gradient(#f8f8f8,#f0f0f0);border-top:1px solid #d0d0d0;border-bottom:1px solid #c0c0c0"></div>
<div class="t" style="left:648px;top:104px;font-size:13px">局部符号</div>
<div class="t" style="left:181px;top:123px;width:59px;text-align:center;font-size:13px">编号</div>
<div class="a" style="left:240px;top:123px;width:1px;height:15px;background:#d0d0d0"></div>
<div class="t" style="left:240px;top:123px;width:152px;text-align:center;font-size:13px">类型</div>
<div class="a" style="left:392px;top:123px;width:1px;height:15px;background:#d0d0d0"></div>
<div class="t" style="left:392px;top:123px;width:135px;text-align:center;font-size:13px">符号名称</div>
<div class="a" style="left:527px;top:123px;width:1px;height:15px;background:#d0d0d0"></div>
<div class="t" style="left:527px;top:123px;width:144px;text-align:center;font-size:13px">地址</div>
<div class="a" style="left:671px;top:123px;width:1px;height:15px;background:#d0d0d0"></div>
<div class="t" style="left:671px;top:123px;width:128px;text-align:center;font-size:13px">数据类型</div>
<div class="a" style="left:799px;top:123px;width:1px;height:15px;background:#d0d0d0"></div>
<div class="t" style="left:799px;top:123px;width:129px;text-align:center;font-size:13px">初始值</div>
<div class="a" style="left:928px;top:123px;width:1px;height:15px;background:#d0d0d0"></div>
<div class="t" style="left:928px;top:123px;width:240px;text-align:center;font-size:13px">符号注释</div>
<div class="t mono" style="left:184px;top:141px;font-size:11px;letter-spacing:-0.6px">1</div>
<div class="a" style="left:240px;top:140px;width:1px;height:15px;background:#a8a8a8"></div>
<div class="t mono" style="left:243px;top:141px;font-size:11px;letter-spacing:-0.6px">VAR_INPUT</div>
<div class="a" style="left:392px;top:140px;width:1px;height:15px;background:#a8a8a8"></div>
<div class="t mono" style="left:395px;top:141px;font-size:11px;letter-spacing:-0.6px">xDataBuf</div>
<div class="a" style="left:527px;top:140px;width:1px;height:15px;background:#a8a8a8"></div>
<div class="t mono" style="left:530px;top:141px;font-size:11px;letter-spacing:-0.6px">N/A [Auto]</div>
<div class="a" style="left:671px;top:140px;width:1px;height:15px;background:#a8a8a8"></div>
<div class="t mono" style="left:674px;top:141px;font-size:11px;letter-spacing:-0.6px">ARRAY [128] OF WORD</div>
<div class="a" style="left:799px;top:140px;width:1px;height:15px;background:#a8a8a8"></div>
<div class="t mono" style="left:802px;top:141px;font-size:11px;letter-spacing:-0.6px">[128(0)]</div>
<div class="a" style="left:928px;top:140px;width:1px;height:15px;background:#a8a8a8"></div>
<div class="t mono" style="left:931px;top:141px;font-size:11px;letter-spacing:-0.6px"></div>
<div class="a" style="left:181px;top:140px;width:987px;height:1px;background:#c0c0c0"></div>
<div class="a" style="left:165px;top:139px;width:16px;height:1px;background:#b8b8b8"></div>
<div class="a" style="left:181px;top:140px;width:1px;height:15px;background:#a0a0a0"></div>
<!-- table vscroll -->
<div class="a" style="left:1168px;top:101px;width:18px;height:54px;background:repeating-conic-gradient(#e8e8e8 0 25%,#fafafa 0 50%) 0 0/2px 2px"></div>
<div class="a" style="left:1168px;top:102px;width:17px;height:16px;background:#f0f0f0;border:1px solid;border-color:#fff #808080 #808080 #fff;box-shadow:1px 1px 0 #404040"></div>
<svg class="a" style="left:1172px;top:107px" width="9" height="5" viewBox="0 0 9 5"><path d="M0 5L4.5 0L9 5Z" fill="#000"/></svg>
<div class="a" style="left:1168px;top:118px;width:17px;height:8px;background:#f0f0f0;border:1px solid;border-color:#fff #808080 #808080 #fff"></div>
<div class="a" style="left:1168px;top:139px;width:17px;height:15px;background:#f0f0f0;border:1px solid;border-color:#fff #808080 #808080 #fff;box-shadow:1px 1px 0 #404040"></div>
<svg class="a" style="left:1172px;top:144px" width="9" height="5" viewBox="0 0 9 5"><path d="M0 0L4.5 5L9 0Z" fill="#000"/></svg>

<!-- splitter -->
<div class="a" style="left:164px;top:156px;width:1023px;height:10px;background:#c0c0c0;border-top:1px solid #f0f0f0"></div>
<div class="a" style="left:524px;top:157px;width:306px;height:7px;background:#c8c8c8;border-top:1px solid #fff;border-left:1px solid #fff"></div>
<svg class="a" style="left:529px;top:158px" width="8" height="5" viewBox="0 0 8 5"><path d="M0.5 4.5L4 1L7.5 4.5" fill="none" stroke="#000" stroke-width="1.6"/></svg>
<svg class="a" style="left:819px;top:158px" width="8" height="5" viewBox="0 0 8 5"><path d="M0.5 4.5L4 1L7.5 4.5" fill="none" stroke="#000" stroke-width="1.6"/></svg>
<div class="a" style="left:538px;top:160px;width:276px;height:2px;background:repeating-linear-gradient(90deg,#fff 0 1px,#1a80e0 1px 2px,#e8d8c8 2px 3px)"></div>

<!-- editor -->
<div class="a" style="left:164px;top:166px;width:1023px;height:541px;background:#fff;border-top:1px solid #fff;border-left:1px solid #f8f8f8;border-bottom:1px solid #a0a0a0;border-right:1px solid #e0e0e0"></div>
<div class="a" style="left:166px;top:167px;width:1020px;height:538px;border-top:2px solid #6e6e6e;border-left:2px solid #6e6e6e"></div>
<div class="a" style="left:168px;top:169px;width:46px;height:517px;background:linear-gradient(90deg,#ffffff,#f0efe6 35%,#e4e1cc 75%,#d6d2b4)"></div>
<div class="a" style="left:218px;top:169px;width:950px;height:14px;background:#faf4c0"></div>
<div class="a" style="left:778px;top:169px;width:1px;height:517px;background:#c8c8c8"></div>
<!-- editor vscroll -->
<div class="a" style="left:1168px;top:169px;width:17px;height:534px;background:#f0f0f0"></div>
<div class="a" style="left:1169px;top:186px;width:15px;height:334px;background:#cdcdcd"></div>
<svg class="a" style="left:1172px;top:174px" width="9" height="6" viewBox="0 0 9 6"><path d="M0.8 5.2L4.5 1.5L8.2 5.2" fill="none" stroke="#606060" stroke-width="1.8"/></svg>
<svg class="a" style="left:1172px;top:675px" width="9" height="6" viewBox="0 0 9 6"><path d="M0.8 0.8L4.5 4.5L8.2 0.8" fill="none" stroke="#606060" stroke-width="1.8"/></svg>
<!-- editor hscroll -->
<div class="a" style="left:168px;top:686px;width:1000px;height:17px;background:#f0f0f0"></div>
<svg class="a" style="left:173px;top:691px" width="6" height="8" viewBox="0 0 6 8"><path d="M5 0.5L1.5 4L5 7.5" fill="none" stroke="#b8b8b8" stroke-width="1.6"/></svg>
<svg class="a" style="left:1156px;top:691px" width="6" height="8" viewBox="0 0 6 8"><path d="M1 0.5L4.5 4L1 7.5" fill="none" stroke="#b8b8b8" stroke-width="1.6"/></svg>
<div class="ln">0001
0002
0003
0004
0005
0006
0007
0008
0009
0010
0011
0012
0013
0014
0015
0016
0017
0018
0019
0020
0021
0022
0023
0024
0025
0026
0027
0028
0029
0030
0031
0032
0033
0034
0035
0036
0037</div>
<div class="code"><div></div><div><span class="k">IF</span> <span class="o">(</span><span class="o">(</span>xDataCount<span class="o">&gt;</span><span class="o">=</span>1<span class="o">)</span> <span class="k">AND</span> <span class="o">(</span>xDataCount<span class="o">&lt;</span><span class="o">=</span>256<span class="o">)</span><span class="o">)</span> <span class="k">THEN</span></div><div>    COM_CRC_Data<span class="o">:</span><span class="o">=</span>16<span class="o">#</span>FFFF<span class="o">;</span></div><div>    TempCount<span class="o">:</span><span class="o">=</span>0<span class="o">;</span></div><div>    TempFOR<span class="o">:</span><span class="o">=</span><span class="o">(</span>xDataCount<span class="o">-</span>1<span class="o">)</span><span class="o">;</span></div><div>    <span class="k">FOR</span> II<span class="o">:</span><span class="o">=</span>0 <span class="k">TO</span> TempFOR <span class="k">BY</span> 1 <span class="k">DO</span></div><div>        TempDataL<span class="o">:</span><span class="o">=</span>xDataBuf<span class="o">[</span>II<span class="o">]</span><span class="o">;</span></div><div>        <span class="f">SFR</span> <span class="o">(</span>0, TempDataL<span class="o">)</span><span class="o">;</span></div><div>        COM_Temp_Data<span class="o">:</span><span class="o">=</span><span class="o">(</span>TempDataL <span class="k">AND</span> 16<span class="o">#</span>00FF<span class="o">)</span><span class="o">;</span></div><div>        COM_CRC_Data<span class="o">:</span><span class="o">=</span><span class="o">(</span>COM_CRC_Data <span class="k">XOR</span> COM_Temp_Data<span class="o">)</span><span class="o">;</span></div><div>        <span class="k">FOR</span> JJ<span class="o">:</span><span class="o">=</span>0 <span class="k">TO</span> 7 <span class="k">BY</span> 1 <span class="k">DO</span></div><div>            <span class="k">IF</span> <span class="o">(</span><span class="o">(</span>COM_CRC_Data <span class="k">AND</span> 16<span class="o">#</span>0001<span class="o">)</span> <span class="o">=</span> 16<span class="o">#</span>0001<span class="o">)</span> <span class="k">THEN</span></div><div>                TempData<span class="o">:</span><span class="o">=</span>COM_CRC_Data<span class="o">;</span></div><div>                <span class="f">SFR</span> <span class="o">(</span>1,TempData<span class="o">)</span><span class="o">;</span></div><div>                COM_CRC_Data<span class="o">:</span><span class="o">=</span>TempData<span class="o">;</span></div><div>                COM_CRC_Data<span class="o">:</span><span class="o">=</span><span class="o">(</span>COM_CRC_Data <span class="k">XOR</span> 16<span class="o">#</span>A001<span class="o">)</span><span class="o">;</span></div><div>            <span class="k">ELSE</span></div><div>                TempData<span class="o">:</span><span class="o">=</span>COM_CRC_Data<span class="o">;</span></div><div>                <span class="f">SFR</span> <span class="o">(</span>1,TempData<span class="o">)</span><span class="o">;</span></div><div>                COM_CRC_Data<span class="o">:</span><span class="o">=</span>TempData<span class="o">;</span></div><div>            <span class="k">END_IF</span><span class="o">;</span></div><div>        <span class="k">END_FOR</span><span class="o">;</span></div><div>        TempCount<span class="o">:</span><span class="o">=</span><span class="o">(</span>TempCount<span class="o">+</span>1<span class="o">)</span><span class="o">;</span></div><div>        <span class="k">IF</span> <span class="o">(</span>TempCount<span class="o">&gt;</span><span class="o">=</span>xDataCount<span class="o">)</span> <span class="k">THEN</span></div><div>            <span class="k">EXIT</span><span class="o">;</span></div><div>        <span class="k">END_IF</span><span class="o">;</span></div><div></div><div>        TempDataH<span class="o">:</span><span class="o">=</span>xDataBuf<span class="o">[</span>II<span class="o">]</span><span class="o">;</span></div><div>        <span class="f">SFR</span> <span class="o">(</span>8, TempDataH<span class="o">)</span><span class="o">;</span></div><div>        COM_Temp_Data<span class="o">:</span><span class="o">=</span><span class="o">(</span>TempDataH <span class="k">AND</span> 16<span class="o">#</span>00FF<span class="o">)</span><span class="o">;</span></div><div>        COM_CRC_Data<span class="o">:</span><span class="o">=</span><span class="o">(</span>COM_CRC_Data <span class="k">XOR</span> COM_Temp_Data<span class="o">)</span><span class="o">;</span></div><div>        <span class="k">FOR</span> JJ<span class="o">:</span><span class="o">=</span>0 <span class="k">TO</span> 7 <span class="k">BY</span> 1 <span class="k">DO</span></div><div>            <span class="k">IF</span> <span class="o">(</span><span class="o">(</span>COM_CRC_Data <span class="k">AND</span> 16<span class="o">#</span>0001<span class="o">)</span> <span class="o">=</span> 16<span class="o">#</span>0001<span class="o">)</span> <span class="k">THEN</span></div><div>                TempData<span class="o">:</span><span class="o">=</span>COM_CRC_Data<span class="o">;</span></div><div>                <span class="f">SFR</span> <span class="o">(</span>1,TempData<span class="o">)</span><span class="o">;</span></div><div>                COM_CRC_Data<span class="o">:</span><span class="o">=</span>TempData<span class="o">;</span></div><div>                COM_CRC_Data<span class="o">:</span><span class="o">=</span><span class="o">(</span>COM_CRC_Data <span class="k">XOR</span> 16<span class="o">#</span>A001<span class="o">)</span><span class="o">;</span></div></div>

<!-- right panel -->
<div class="a" style="left:1187px;top:100px;width:173px;height:607px;background:#f0f0f0;border-left:1px solid #f8f8f8"></div>
<div class="a" style="left:1190px;top:102px;width:168px;height:20px;background:#f0f0f0;border:1px solid #a0a0a0;border-radius:2px"></div>
<div class="t" style="left:1195px;top:104px;font-size:13px">台达函数库，预览</div>
<svg class="a" style="left:1330px;top:106px" width="9" height="11" viewBox="0 0 9 11"><path d="M2 1H7V7H2Z" fill="none" stroke="#000" stroke-width="1.5"/><rect x="5" y="1" width="2" height="6" fill="#000"/><path d="M0 7.5H9M4.5 7.5V11" stroke="#000" stroke-width="1.3"/></svg>
<svg class="a" style="left:1344px;top:107px" width="9" height="9" viewBox="0 0 9 9"><path d="M0.5 0.5L8.5 8.5M8.5 0.5L0.5 8.5" stroke="#000" stroke-width="1"/></svg>
<div class="a" style="left:1188px;top:148px;width:5px;height:559px;background:linear-gradient(90deg,#d8d8d8,#c4c4c4 50%,#d4d4d4)"></div>
<div class="a" style="left:1356px;top:148px;width:4px;height:559px;background:#cfcfcf"></div>
<div class="a" style="left:1188px;top:702px;width:172px;height:5px;background:#a8a8a8"></div>
<div class="a" style="left:1188px;top:640px;width:5px;height:67px;background:#a4a4a4"></div>
<div class="a" style="left:1356px;top:640px;width:4px;height:67px;background:#a8a8a8"></div>
<!-- section: delta library -->
<div class="a" style="left:1192px;top:126px;width:164px;height:20px;background:#f0f0f0;border:1px solid #a0a0a0;border-radius:2px"></div>
<div class="t" style="left:1197px;top:128px;font-size:13px">台达函数库</div>
<svg class="a" style="left:1341px;top:134px" width="9" height="5" viewBox="0 0 9 5"><path d="M0 5L4.5 0L9 5Z" fill="#000"/></svg>
<div class="a" style="left:1193px;top:148px;width:162px;height:306px;background:#fff;border-top:2px solid #707070;border-left:2px solid #707070;border-right:1px solid #d8d8d8;border-bottom:1px solid #e8e8e8"></div>
<div class="a" style="left:1198px;top:153px;width:9px;height:9px;background:#fff;border:1px solid #8c8c8c"></div>
<div class="a" style="left:1200px;top:157px;width:5px;height:1px;background:#000"></div>
<div class="a" style="left:1202px;top:155px;width:1px;height:5px;background:#000"></div>
<div class="a" style="left:1207px;top:157px;width:14px;height:1px;background:repeating-linear-gradient(90deg,#a0a0a0 0 1px,transparent 1px 2px)"></div>
<svg class="a" style="left:1221px;top:150px" width="16" height="15" viewBox="0 0 16 15"><polygon points="8,0 15,3 8,6 1,3" fill="#6ab830"/><polygon points="1,3 8,6 8,15 1,12" fill="#e02828"/><polygon points="15,3 8,6 8,15 15,12" fill="#3a78c0"/><polyline points="1,3 8,6 15,3" fill="none" stroke="#fff" stroke-width="0.8"/><line x1="8" y1="6" x2="8" y2="15" stroke="#fff" stroke-width="0.8"/></svg>
<div class="t" style="left:1242px;top:151px;font-size:13px">台达函数库</div>
<!-- tab strip 1 -->
<div class="a" style="left:1193px;top:454px;width:163px;height:28px;background:linear-gradient(#fff,#f2f2f2)"></div>
<div class="a" style="left:1193px;top:457px;width:163px;height:2px;background:#0078d7"></div>
<div class="a" style="left:1196px;top:457px;width:73px;height:24px;background:#b8d8f2;border:2px solid #0078d7;border-top:0"></div>
<div class="t" style="left:1200px;top:462px;font-size:13px">台达函数库</div>
<div class="a" style="left:1270px;top:459px;width:48px;height:20px;overflow:hidden"><div class="t" style="left:4px;top:3px;font-size:13px">用户自定</div></div>
<svg class="a" style="left:1325px;top:464px" width="6" height="9" viewBox="0 0 6 9"><path d="M5.5 0.5L0.8 4.5L5.5 8.5Z" fill="none" stroke="#a0a0a0" stroke-width="1"/></svg>
<svg class="a" style="left:1342px;top:464px" width="6" height="9" viewBox="0 0 6 9"><path d="M0 0L6 4.5L0 9Z" fill="#707070"/></svg>
<div class="a" style="left:1193px;top:482px;width:163px;height:1px;background:#b0b0b0"></div>
<!-- section: preview -->
<div class="a" style="left:1192px;top:486px;width:164px;height:20px;background:#f0f0f0;border:1px solid #a0a0a0;border-radius:2px"></div>
<div class="t" style="left:1197px;top:488px;font-size:13px">预览</div>
<svg class="a" style="left:1341px;top:494px" width="9" height="5" viewBox="0 0 9 5"><path d="M0 5L4.5 0L9 5Z" fill="#000"/></svg>
<div class="a" style="left:1193px;top:509px;width:162px;height:167px;background:#fff;border:1px solid #a0a0a0;box-shadow:inset 0 0 0 1px #fff, 0 0 0 1px #fff"></div>
<!-- tab strip 2 -->
<div class="a" style="left:1193px;top:677px;width:163px;height:25px;background:linear-gradient(#fff,#f2f2f2)"></div>
<div class="a" style="left:1193px;top:679px;width:163px;height:2px;background:#0078d7"></div>
<div class="a" style="left:1196px;top:679px;width:34px;height:23px;background:#b8d8f2;border:2px solid #0078d7;border-top:0"></div>
<div class="t" style="left:1200px;top:684px;font-size:13px">预览</div>

<!-- status bar -->
<div class="a" style="left:0;top:707px;width:1360px;height:21px;background:#f0f0f0"></div>
<div class="a" style="left:1px;top:708px;width:52px;height:19px;border:1px solid;border-color:#d8d8d8 #fff #fff #d8d8d8;box-shadow:inset -1px -1px 0 #e4e4e4;background:linear-gradient(#f4f4f4,#f8f8f8)"></div>
<div class="a" style="left:55px;top:708px;width:31px;height:19px;border:1px solid;border-color:#d8d8d8 #fff #fff #d8d8d8;box-shadow:inset -1px -1px 0 #e4e4e4;background:linear-gradient(#f4f4f4,#f8f8f8)"></div>
<div class="a" style="left:89px;top:708px;width:101px;height:19px;border:1px solid;border-color:#d8d8d8 #fff #fff #d8d8d8;box-shadow:inset -1px -1px 0 #e4e4e4;background:linear-gradient(#f4f4f4,#f8f8f8)"></div>
<div class="a" style="left:193px;top:708px;width:132px;height:19px;border:1px solid;border-color:#d8d8d8 #fff #fff #d8d8d8;box-shadow:inset -1px -1px 0 #e4e4e4;background:linear-gradient(#f4f4f4,#f8f8f8)"></div>
<div class="a" style="left:327px;top:708px;width:162px;height:19px;border:1px solid;border-color:#d8d8d8 #fff #fff #d8d8d8;box-shadow:inset -1px -1px 0 #e4e4e4;background:linear-gradient(#f4f4f4,#f8f8f8)"></div>
<div class="a" style="left:491px;top:708px;width:62px;height:19px;border:1px solid;border-color:#d8d8d8 #fff #fff #d8d8d8;box-shadow:inset -1px -1px 0 #e4e4e4;background:linear-gradient(#f4f4f4,#f8f8f8)"></div>
<div class="a" style="left:555px;top:708px;width:71px;height:19px;border:1px solid;border-color:#d8d8d8 #fff #fff #d8d8d8;box-shadow:inset -1px -1px 0 #e4e4e4;background:linear-gradient(#f4f4f4,#f8f8f8)"></div>
<div class="a" style="left:629px;top:708px;width:254px;height:19px;border:1px solid;border-color:#d8d8d8 #fff #fff #d8d8d8;box-shadow:inset -1px -1px 0 #e4e4e4;background:linear-gradient(#f4f4f4,#f8f8f8)"></div>
<div class="a" style="left:885px;top:708px;width:469px;height:19px;border:1px solid;border-color:#d8d8d8 #fff #fff #d8d8d8;box-shadow:inset -1px -1px 0 #e4e4e4;background:linear-gradient(#f4f4f4,#f8f8f8)"></div>
<div class="t" style="left:59px;top:711px;font-size:13px">插入</div>
<div class="t" style="left:93px;top:711px;font-size:13px">行<span class="mono" style="font-size:12px;letter-spacing:-0.2px">:1 </span>列<span class="mono" style="font-size:12px;letter-spacing:-0.2px">:1</span></div>
<div class="t mono" style="left:330px;top:711px;font-size:12px;letter-spacing:-0.2px">807/65504 Steps</div>
<div class="a" style="left:496px;top:712px;width:10px;height:10px;background:#c8c0c0"></div>
<div class="t" style="left:559px;top:711px;font-size:13px">离线状态</div>
<div class="t mono" style="left:633px;top:711px;font-size:12px;letter-spacing:-0.2px">Driver1, [Ethernet], 192.168.1.167</div>
<div class="t mono" style="left:889px;top:711px;font-size:12px;letter-spacing:-0.2px">ES3</div>

</body></html>
